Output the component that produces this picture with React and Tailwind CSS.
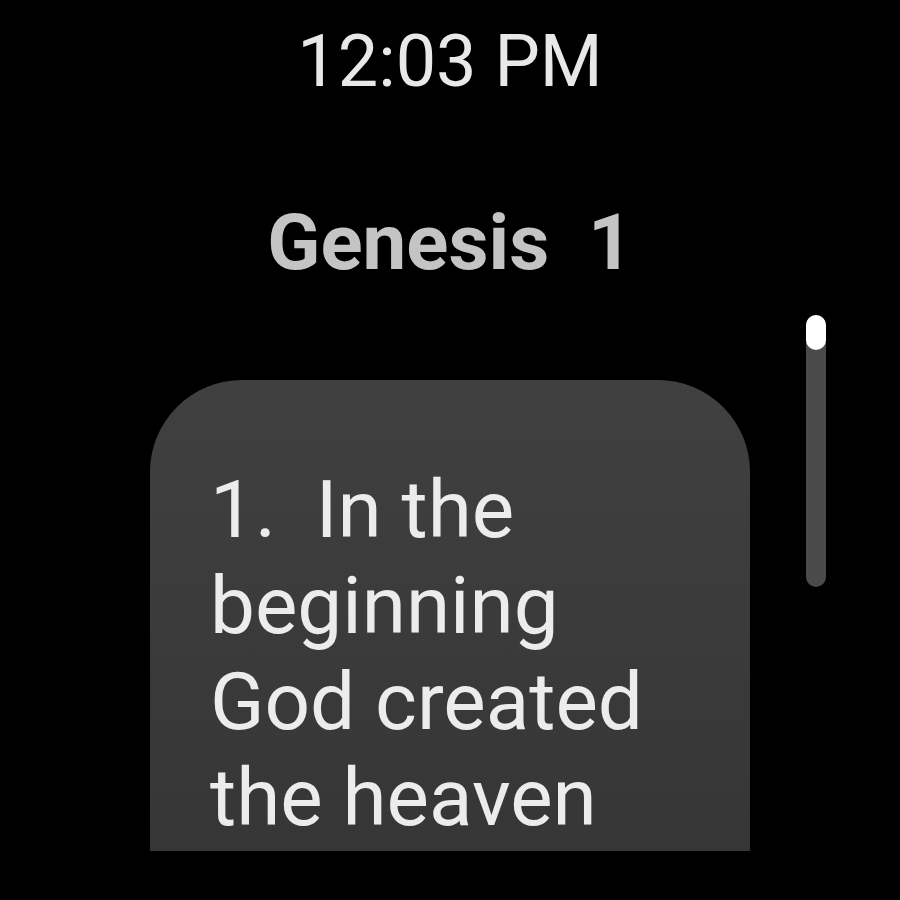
const verse = '1.  In the beginning God created the heaven'

const App = () => {
  return (
    <div className="relative w-[900px] h-[900px] bg-black overflow-hidden" style={{ fontFamily: 'Roboto, "Noto Sans", sans-serif' }}>
      <div className="flex flex-col items-center">
        {/* Clock */}
        <div className="mt-[26px] text-[72px] leading-[72px] text-[#e8e8e8]">12:03 PM</div>

        {/* Chapter title */}
        <div className="mt-[106px] text-[78px] leading-[78px] font-bold text-[#c2c4c6] whitespace-pre">Genesis  1</div>

        {/* Verse card */}
        <div className="mt-[98px] w-[600px] h-[471px] rounded-t-[92px] bg-gradient-to-b from-[#404040] to-[#363636] overflow-hidden">
          <div className="pt-[82px] pl-[60px] pr-[40px]">
            <p className="text-[80px] leading-[96px] text-[#ececec] whitespace-pre-wrap">{verse}</p>
          </div>
        </div>
      </div>

      {/* Scroll indicator */}
      <div className="absolute left-[806px] top-[315px] w-[20px] h-[272px] rounded-full bg-[#4a4a4a]">
        <div className="w-[20px] h-[35px] rounded-full bg-white"></div>
      </div>
    </div>
  )
}

export default App
